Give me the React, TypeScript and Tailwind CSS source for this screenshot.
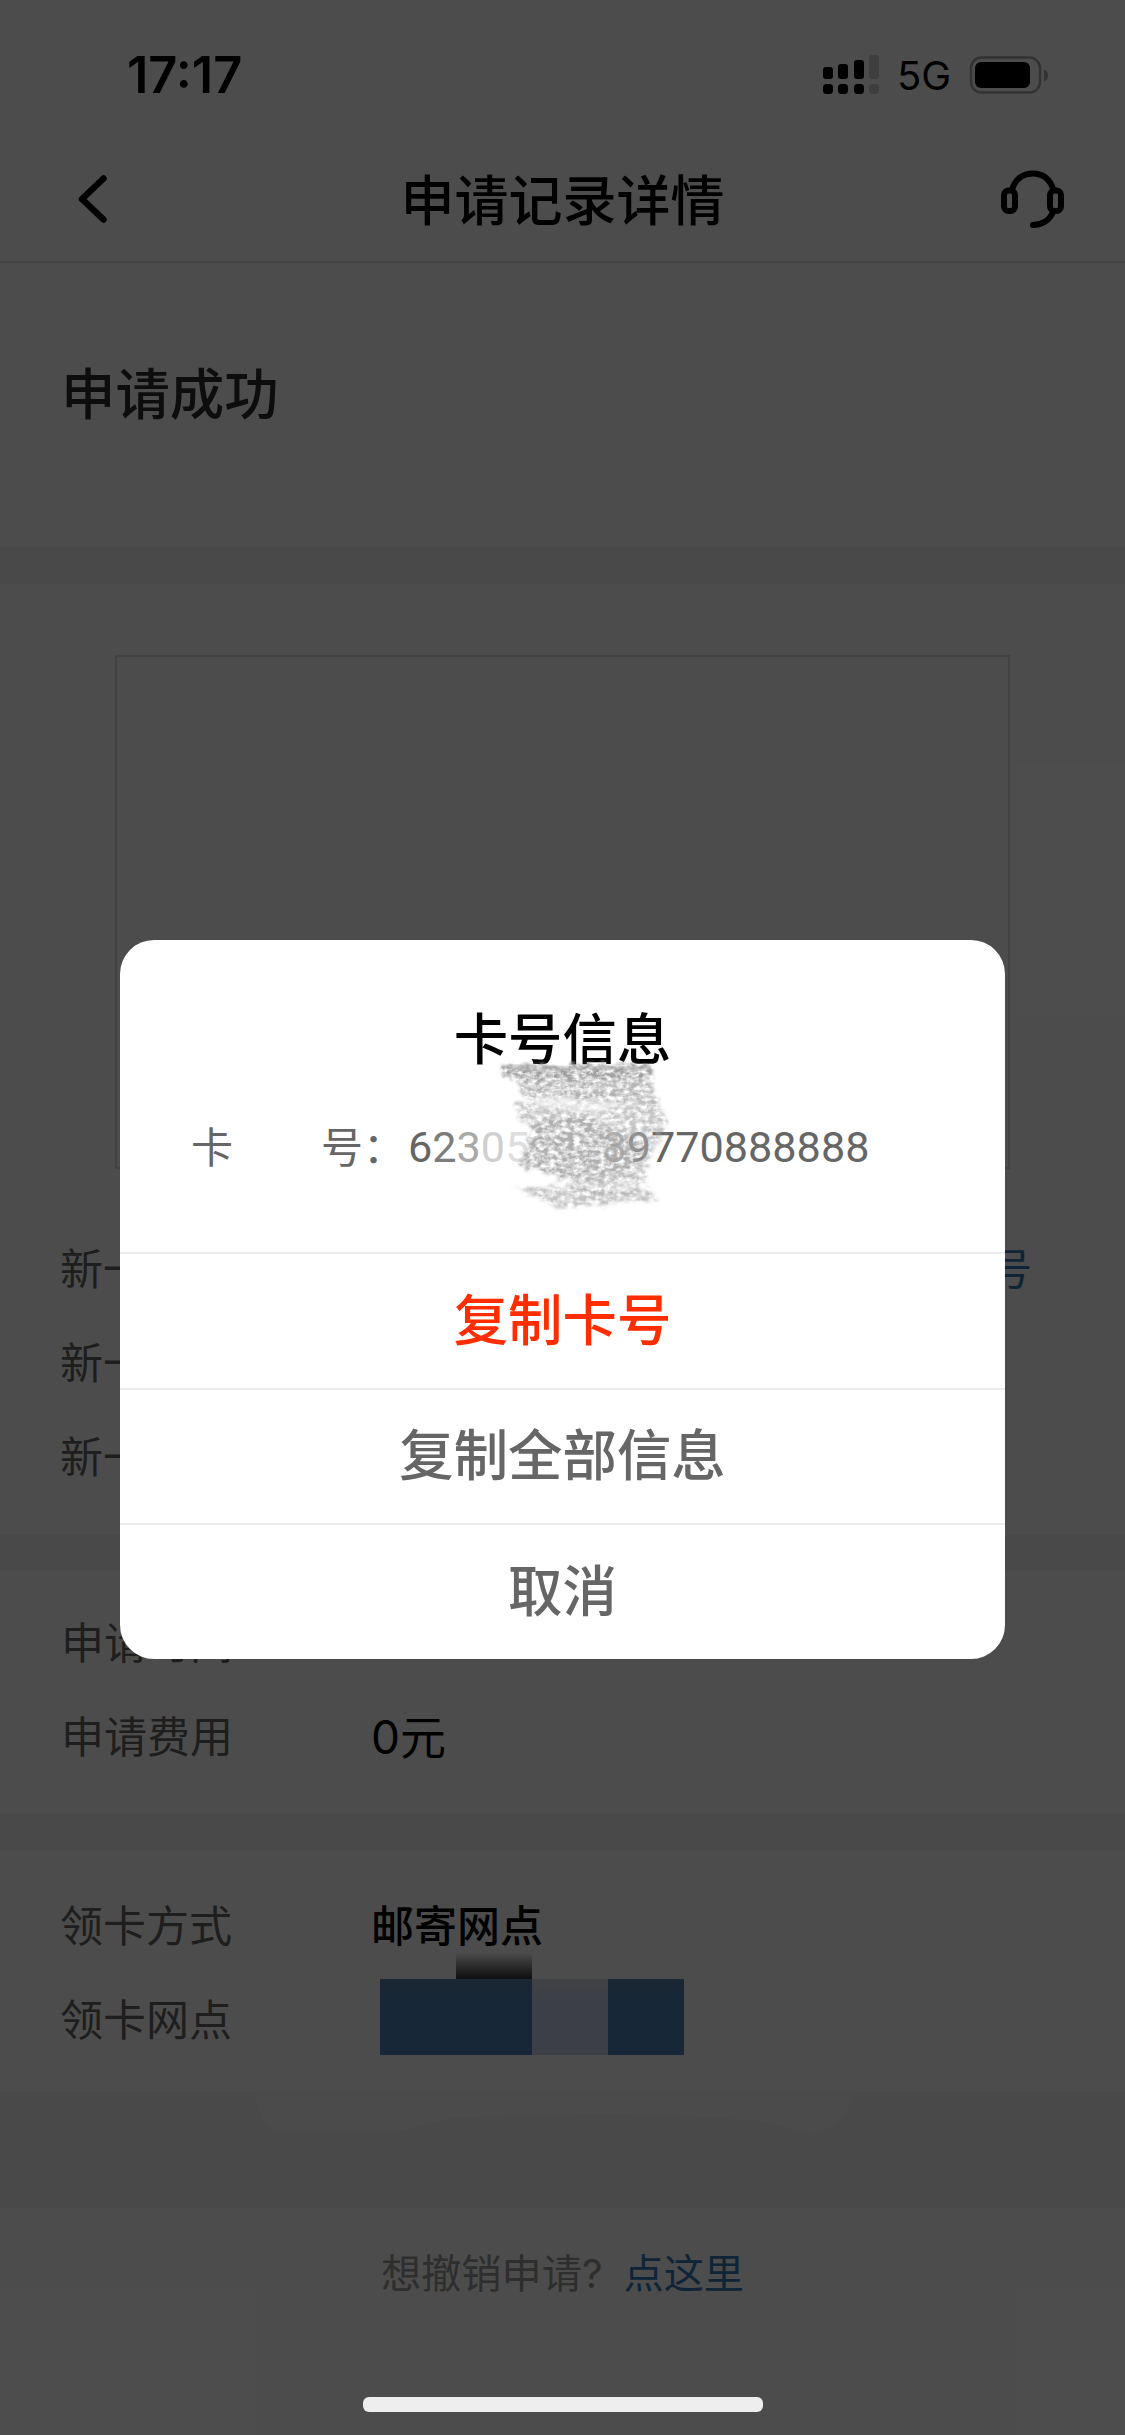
import { PropsWithChildren } from "react";

export default function App() {
  return (
    <main className="relative h-[2435px] w-[1125px] overflow-hidden bg-white font-['Inter','Noto_Sans_CJK_SC',sans-serif] text-black">
      <StatusBar />
      <NavBar />
      <section className="h-[284px] px-[61px] pt-[91px]">
        <h2 className="text-[54.4px] leading-[80px] font-medium text-[#2c2c2c]">
          申请成功
        </h2>
      </section>
      <Divider className="h-[37px]" />

      <section className="h-[951px] pt-[71px]">
        <div className="mx-auto mb-[53px] h-[514px] w-[895px] border-2 border-[#dcdcdc]" />
        {newCardRows.map((row) => (
          <Row key={row.label} label={row.label} className="pr-[93px] pl-[60px]">
            {row.link && (
              <span className="ml-auto text-[43px] text-[#3578b5]">
                {row.link}
              </span>
            )}
          </Row>
        ))}
      </section>
      <Divider className="h-9" />

      <section className="h-[242px] pt-[25px]">
        <Row label="申请时间" className="pl-[61px]" />
        <Row label="申请费用" className="pl-[61px]">
          <span className="ml-[-1px] text-[46px]">0元</span>
        </Row>
      </section>
      <Divider className="h-[38px]" />

      <section className="h-[241px] pt-[28px]">
        <Row label="领卡方式">
          <span className="text-[43px] font-medium">邮寄网点</span>
        </Row>
        <Row label="领卡网点">
          <Mosaic />
        </Row>
      </section>
      <Divider className="h-[116px]">
        <svg width="600" height="46" className="ml-[255px]">
          <path
            d="M0 0h600q-12 36-40 42l-60-14-140-6-160 4-60 14H20Q4 30 0 0z"
            fill="#fafafa"
          />
        </svg>
      </Divider>

      <footer className="flex justify-center pt-[36px] text-[40.2px] leading-[60px] text-[#999]">
        想撤销申请?<span className="ml-[21px] text-[#3578b5]">点这里</span>
      </footer>

      <div className="absolute inset-0 flex flex-col items-center bg-black/70 pt-[940px]">
        <CardNumberDialog />
        <div className="mt-auto mb-[23px] h-[15px] w-[400px] rounded-[6px] bg-[#eee]" />
      </div>
    </main>
  );
}

function StatusBar() {
  return (
    <header className="flex h-[150px] items-center justify-between pr-[74px] pl-[127px]">
      <time className="text-[50.5px] leading-none font-semibold">17:17</time>
      <div className="flex items-center">
        <svg width="58" height="42" viewBox="0 0 58 42">
          {signalBars.map((bar) => (
            <g key={bar.x} fill={bar.fill}>
              <rect x={bar.x} y={bar.y} width="10" height={25 - bar.y} rx="3" />
              <rect x={bar.x} y="30" width="10" height="10" rx="3.5" />
            </g>
          ))}
        </svg>
        <span className="ml-[16px] w-[54px] pt-[2px] text-[40px] leading-none">
          5G
        </span>
        <svg width="82" height="40" viewBox="0 0 82 40" className="ml-[18px]">
          <rect x="2" y="2.5" width="69" height="35" rx="10.5" fill="none" stroke="#a8a8a8" strokeWidth="2.5" />
          <rect x="6" y="7" width="55" height="26" rx="6" />
          <path d="M75 14.5q4 1.5 4 6t-4 6z" fill="#a8a8a8" />
        </svg>
      </div>
    </header>
  );
}

function NavBar() {
  return (
    <nav className="flex h-[113px] items-center justify-between border-b-2 border-[#e2e2e2] pr-[59px] pb-[14px] pl-[77px]">
      <svg width="52" height="50" viewBox="0 0 52 50" fill="none">
        <path d="M26.5 4.5 5 25l21.5 20.5" stroke="#000" strokeWidth="6.5" strokeLinecap="round" strokeLinejoin="round" />
      </svg>
      <h1 className="mr-[4px] pt-[6px] text-[54px] leading-none font-medium">
        申请记录详情
      </h1>
      <svg width="66" height="62" viewBox="0 0 66 62" fill="none" stroke="#000" strokeWidth="6">
        <rect x="4" y="22.5" width="11" height="20.5" rx="4.5" />
        <rect x="50" y="22.5" width="11" height="20.5" rx="4.5" />
        <path d="M12 22C15 11 23 5.5 32.7 5.5S50 11 53.5 22M53 44C50 52 42 57 33 57" strokeLinecap="round" />
      </svg>
    </nav>
  );
}

function Divider({
  className,
  children,
}: PropsWithChildren<{ className: string }>) {
  return <div className={`bg-[#f4f4f4] ${className}`}>{children}</div>;
}

function Row({
  label,
  className = "pl-[60px]",
  children,
}: PropsWithChildren<{ label: string; className?: string }>) {
  return (
    <div className={`flex h-[94px] items-center ${className}`}>
      <span className="w-[311px] text-[43px] text-[#666]">{label}</span>
      {children}
    </div>
  );
}

function Mosaic() {
  return (
    <div className="relative -top-[3px] ml-[9px] flex h-[76px]">
      <div className="absolute -top-[26px] left-[76px] h-[26px] w-[76px] bg-linear-to-b from-white to-[#333]" />
      <div className="w-[152px] bg-linear-to-b from-[#5b84a8] to-[#4d82b7] to-30%" />
      <div className="w-[76px] bg-linear-to-b from-[#d8dee6] to-[#cbd3ee] to-30%" />
      <div className="w-[76px] bg-linear-to-b from-[#5b84a8] to-[#4d82b7] to-30%" />
    </div>
  );
}

function CardNumberDialog() {
  return (
    <section
      role="dialog"
      className="relative h-[719px] w-[885px] overflow-hidden rounded-[34px] bg-white text-center"
    >
      <div className="h-[312px] pt-[59px]">
        <h2 className="text-[54.4px] leading-[80px] font-medium">卡号信息</h2>
        <p className="mt-[39px] flex pl-[71px] text-left text-[42px] leading-[60px] text-[#666]">
          <span>卡</span>
          <span className="ml-[88px] w-[88px]">号：</span>
          <span className="ml-[-1px] flex font-['Roboto',sans-serif] text-[43.2px]">
            <span>6</span>
            <span className="text-[#7d7d7d]">2</span>
            <span className="text-[#a9a9a9]">3</span>
            <span className="text-[#cfcfcf]">0</span>
            <span className="mr-[73px] text-[#dedede]">5</span>
            <span className="text-[#b0b0b0]">3</span>
            <span className="text-[#888]">9</span>
            <span>770888888</span>
          </span>
        </p>
      </div>
      <Scribble />
      {actions.map((action) => (
        <button
          key={action.label}
          className={`block h-[135.6px] w-full border-t-2 border-[#ececec] pb-[2px] text-[54.4px] leading-none font-medium ${action.className}`}
        >
          {action.label}
        </button>
      ))}
    </section>
  );
}

// pencil strokes rubbed over the middle of the card number
function Scribble() {
  return (
    <svg width="180" height="160" viewBox="0 0 180 160" className="absolute top-[120px] left-[379px]">
      <filter id="pencil" x="0" y="0" width="180" height="160" filterUnits="userSpaceOnUse" colorInterpolationFilters="sRGB">
        <feTurbulence type="fractalNoise" baseFrequency="0.16 0.22" numOctaves="5" seed="11" />
        <feColorMatrix values="0 0 0 0 0.62  0 0 0 0 0.62  0 0 0 0 0.62  2 1.2 0 0 -1" result="grain" />
        <feTurbulence type="fractalNoise" baseFrequency="0.12" numOctaves="3" seed="3" result="wobble" />
        <feDisplacementMap in="SourceGraphic" in2="wobble" scale="16" xChannelSelector="R" yChannelSelector="G" result="shape" />
        <feGaussianBlur in="shape" stdDeviation="1.5" result="soft" />
        <feComposite in="grain" in2="soft" operator="in" />
      </filter>
      <path d="M10 4 70 6 152 7v4L90 9 14 12z" fill="#a9a9a9" fillOpacity="0.4" />
      <g filter="url(#pencil)">
        <path d="M6 3 154 6v12L18 20 4 16z" fill="#000" />
        <path d="M14 6 152 8 154 36 130 42 60 38 22 34z" fill="#000" fillOpacity="0.75" />
        <path d="M22 32 154 32 160 46 100 50 44 46z" fill="#000" fillOpacity="0.3" />
        <path d="M12 42 100 52 162 38 168 72 150 96 146 122 90 124 20 106 34 74z" fill="#000" fillOpacity="0.6" />
        <path d="M34 62 80 54 140 84 136 112 60 116 22 106z" fill="#000" fillOpacity="0.6" />
        <path d="M70 116 140 116 140 134 70 134z" fill="#000" fillOpacity="0.45" />
        <path d="M14 128 60 126 156 130 158 142 60 147z" fill="#000" fillOpacity="0.6" />
      </g>
    </svg>
  );
}

const signalBars = [
  { x: 0, y: 13, fill: "#000" },
  { x: 15, y: 10, fill: "#000" },
  { x: 31, y: 6, fill: "#000" },
  { x: 46, y: 1, fill: "#d0d0d0" },
];

const newCardRows = [
  { label: "新一卡号", link: "复制卡号" },
  { label: "新一卡种" },
  { label: "新一类型" },
];

const actions = [
  { label: "复制卡号", className: "text-[#ff2d00]" },
  { label: "复制全部信息", className: "text-[#666]" },
  { label: "取消", className: "text-[#666]" },
];
